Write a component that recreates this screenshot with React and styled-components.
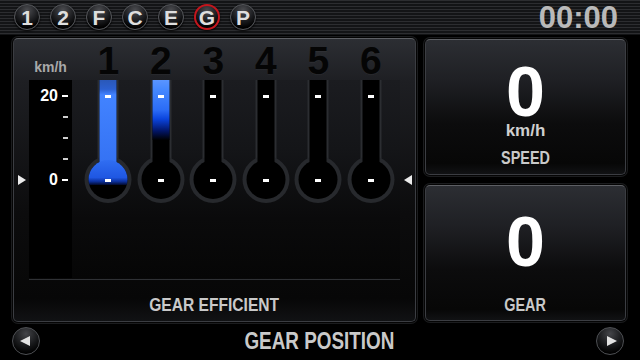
import React from "react"
import styled, { createGlobalStyle } from "styled-components"

const GlobalStyle = createGlobalStyle`
  html, body {
    margin: 0;
    padding: 0;
    background: #000;
  }
  body {
    font-family: "Liberation Sans", Arial, sans-serif;
  }
`

const Screen = styled.div`
  width: 640px;
  height: 360px;
  overflow: hidden;
  background: #000;
  display: flex;
  flex-direction: column;
`

const TopBar = styled.div`
  height: 36px;
  flex: none;
  box-sizing: border-box;
  display: flex;
  align-items: center;
  padding: 0 22px 1px 14px;
  background: repeating-linear-gradient(to bottom, #2c2d30 0 1px, #131416 1px 3px);
  border-bottom: 1px solid #000;
`
const ModeButtons = styled.div`
  display: flex;
  gap: 10px;
`
const ModeButton = styled.div`
  width: 26px;
  height: 26px;
  box-sizing: border-box;
  border-radius: 50%;
  display: flex;
  align-items: center;
  justify-content: center;
  background: radial-gradient(circle at 50% 22%, #4c4d51 0%, #1c1d20 48%, #000 78%);
  border: ${p => (p.$active ? "2px solid #c3161d" : "1px solid #56585c")};
  box-shadow: 0 1px 2px #000;
  color: #dedede;
  font-weight: bold;
  font-size: 21px;
  line-height: 1;
`
const Clock = styled.div`
  margin-left: auto;
  color: #b9b9b9;
  font-weight: bold;
  font-size: 31px;
  line-height: 1;
`

const Main = styled.div`
  display: flex;
  gap: 9px;
  padding: 2px 14px 0 13px;
  height: 284px;
  flex: none;
`

const Panel = styled.div`
  box-sizing: border-box;
  border-radius: 5px;
  border: 1px solid #3b3d42;
  border-top-color: #5d5f64;
  box-shadow: 0 0 0 1px #050505, 0 0 0 2px #1b1c1e;
  background: linear-gradient(to bottom, #2c2e33 0, #1e1f23 42px, #0c0c0d 62%, #070707 92%, #111214 100%);
`

const GaugePanel = styled(Panel)`
  width: 403px;
  height: 284px;
  display: flex;
  flex-direction: column;
`
const HeaderRow = styled.div`
  height: 41px;
  display: flex;
  align-items: flex-end;
  padding: 0 15px;
`
const UnitLabel = styled.div`
  width: 43px;
  text-align: center;
  color: #a9a9a9;
  font-weight: bold;
  font-size: 14px;
  padding-bottom: 5px;
`
const GaugeGrid = styled.div`
  flex: 1;
  display: grid;
  grid-template-columns: repeat(6, 1fr);
  padding: 0 3px 0 10px;
  justify-items: center;
  align-items: end;
`
const GearNumber = styled.div`
  color: #050505;
  font-weight: bold;
  font-size: 39px;
  line-height: 1;
  text-shadow: 0 1px 0 rgba(255, 255, 255, 0.05);
`

const GraphRow = styled.div`
  height: 198px;
  display: flex;
`
const MarkerColumn = styled.div`
  width: 15px;
  display: flex;
  justify-content: center;
  padding-top: 95px;
`
const Marker = styled.div`
  width: 0;
  height: 0;
  border-top: 5px solid transparent;
  border-bottom: 5px solid transparent;
  ${p => (p.$dir === "right" ? "border-left: 8px solid #ececec;" : "border-right: 8px solid #ececec;")}
`
const Graph = styled.div`
  width: 371px;
  display: flex;
`
const Scale = styled.div`
  width: 43px;
  background: #000;
  padding-top: 5.5px;
  box-sizing: border-box;
`
const ScaleRow = styled.div`
  height: 21px;
  display: flex;
  align-items: center;
  justify-content: flex-end;
  gap: 4px;
  padding-right: 4px;
  color: #fff;
  font-weight: bold;
  font-size: 16px;
`
const Tick = styled.div`
  width: ${p => (p.$major ? 6 : 5)}px;
  height: 2px;
  background: ${p => (p.$major ? "#fff" : "#cfcfcf")};
`
const Gauges = styled(GaugeGrid)`
  align-items: start;
  background: linear-gradient(to bottom, #1b1c20 0%, #141518 35%, #0a0a0b 70%, #060606 100%);
`

const Divider = styled.div`
  height: 1px;
  margin: 1px 15px 0;
  background: #2f3135;
`
const PanelFooter = styled.div`
  flex: 1;
  display: flex;
  align-items: center;
  justify-content: center;
  padding-top: 8px;
`
/* condensed caption: no narrow face is installed, so squeeze the bold sans */
const Caption = styled.div`
  display: inline-block;
  font-weight: bold;
  font-size: ${p => p.$size || 19}px;
  color: #c9c9c9;
  line-height: 1;
  white-space: nowrap;
  transform: scaleX(${p => p.$squeeze || 0.82});
`

const SideColumn = styled.div`
  width: 201px;
  padding-top: 1px;
  display: flex;
  flex-direction: column;
  gap: 10px;
`
const ValuePanel = styled(Panel)`
  height: 136px;
  display: flex;
  flex-direction: column;
  align-items: center;
  padding-top: ${p => p.$top}px;
`
const BigValue = styled.div`
  color: #fff;
  font-weight: bold;
  font-size: 70px;
  line-height: 56px;
  height: 56px;
`
const Unit = styled.div`
  color: #cfcfcf;
  font-weight: bold;
  font-size: 17px;
  line-height: 1;
  margin-top: 2px;
`
const ValueCaption = styled(Caption)`
  margin-top: ${p => p.$gap}px;
`

const BottomBar = styled.div`
  flex: 1;
  display: flex;
  align-items: center;
  padding: 0 16px 0 12px;
`
const RoundButton = styled.div`
  width: 28px;
  height: 28px;
  flex: none;
  box-sizing: border-box;
  border-radius: 50%;
  border: 1px solid #4e5054;
  background: radial-gradient(circle at 50% 22%, #444549 0%, #17181a 50%, #000 80%);
  display: flex;
  align-items: center;
  justify-content: center;
`
const Arrow = styled.div`
  width: 0;
  height: 0;
  border-top: 5px solid transparent;
  border-bottom: 5px solid transparent;
  ${p =>
    p.$dir === "right"
      ? "border-left: 10px solid #e2e2e2; margin-left: 3px;"
      : "border-right: 10px solid #e2e2e2; margin-right: 3px;"}
`
const TitleSlot = styled.div`
  flex: 1;
  display: flex;
  justify-content: center;
  padding-left: 3px;
`

const modes = ["1", "2", "F", "C", "E", "G", "P"]
const scale = [
  { label: "20", major: true },
  { label: "" },
  { label: "" },
  { label: "" },
  { label: "0", major: true },
]
const gears = [
  { num: 1, fill: "full" },
  { num: 2, fill: "top" },
  { num: 3 },
  { num: 4 },
  { num: 5 },
  { num: 6 },
]

const Thermometer = ({ id, fill }) => (
  <svg width="52" height="198" viewBox="0 0 52 198">
    <defs>
      <linearGradient id={`tube${id}`} x1="0" y1="0" x2="0" y2="92" gradientUnits="userSpaceOnUse">
        <stop offset="0" stopColor="#2a58b8" />
        <stop offset="0.1" stopColor="#2c60d0" />
        <stop offset="0.16" stopColor="#4283ff" />
        <stop offset="1" stopColor="#3370f2" />
      </linearGradient>
      <linearGradient id={`bulb${id}`} x1="0" y1="80" x2="0" y2="105" gradientUnits="userSpaceOnUse">
        <stop offset="0" stopColor="#306ef2" />
        <stop offset="0.7" stopColor="#1f57e2" />
        <stop offset="0.86" stopColor="#0c309c" />
        <stop offset="1" stopColor="#020a2a" />
      </linearGradient>
      <linearGradient id={`top${id}`} x1="0" y1="0" x2="0" y2="60" gradientUnits="userSpaceOnUse">
        <stop offset="0" stopColor="#5a95ff" />
        <stop offset="0.15" stopColor="#4689ff" />
        <stop offset="0.5" stopColor="#2b6cf6" />
        <stop offset="0.65" stopColor="#0b44dd" />
        <stop offset="0.85" stopColor="#021566" />
        <stop offset="1" stopColor="#000" />
      </linearGradient>
      <clipPath id={`clip${id}`}>
        <rect x="0" y="0" width="52" height="105" />
      </clipPath>
    </defs>
    <rect x="15.5" y="0" width="21" height="90" fill="#2b2d31" />
    <circle cx="26" cy="99.5" r="23.5" fill="#27292d" />
    <rect x="17.5" y="0" width="17" height="95" fill="#000" />
    <circle cx="26" cy="99.5" r="19.5" fill="#000" />
    {fill === "full" && (
      <>
        <rect x="17.5" y="0" width="17" height="92" fill={`url(#tube${id})`} />
        <circle cx="26" cy="99.5" r="19.5" fill={`url(#bulb${id})`} clipPath={`url(#clip${id})`} />
      </>
    )}
    {fill === "top" && <rect x="17.5" y="0" width="17" height="60" fill={`url(#top${id})`} />}
    <rect x="23" y="15" width="6" height="3" fill="#fff" />
    <rect x="23" y="99" width="6" height="3" fill="#fff" />
  </svg>
)

const App = () => {
  return (
    <Screen>
      <GlobalStyle />
      <TopBar>
        <ModeButtons>
          {modes.map(m => (
            <ModeButton key={m} $active={m === "G"}>
              {m}
            </ModeButton>
          ))}
        </ModeButtons>
        <Clock>00:00</Clock>
      </TopBar>

      <Main>
        <GaugePanel>
          <HeaderRow>
            <UnitLabel>km/h</UnitLabel>
            <GaugeGrid>
              {gears.map(g => (
                <GearNumber key={g.num}>{g.num}</GearNumber>
              ))}
            </GaugeGrid>
          </HeaderRow>
          <GraphRow>
            <MarkerColumn>
              <Marker $dir="right" />
            </MarkerColumn>
            <Graph>
              <Scale>
                {scale.map((s, i) => (
                  <ScaleRow key={i}>
                    {s.label && <span>{s.label}</span>}
                    <Tick $major={s.major} />
                  </ScaleRow>
                ))}
              </Scale>
              <Gauges>
                {gears.map(g => (
                  <Thermometer key={g.num} id={g.num} fill={g.fill} />
                ))}
              </Gauges>
            </Graph>
            <MarkerColumn>
              <Marker $dir="left" />
            </MarkerColumn>
          </GraphRow>
          <Divider />
          <PanelFooter>
            <Caption $size={19} $squeeze={0.82}>GEAR EFFICIENT</Caption>
          </PanelFooter>
        </GaugePanel>

        <SideColumn>
          <ValuePanel $top={24}>
            <BigValue>0</BigValue>
            <Unit>km/h</Unit>
            <ValueCaption $size={18} $squeeze={0.8} $gap={10}>SPEED</ValueCaption>
          </ValuePanel>
          <ValuePanel $top={28}>
            <BigValue>0</BigValue>
            <ValueCaption $size={18} $squeeze={0.8} $gap={26}>GEAR</ValueCaption>
          </ValuePanel>
        </SideColumn>
      </Main>

      <BottomBar>
        <RoundButton>
          <Arrow $dir="left" />
        </RoundButton>
        <TitleSlot>
          <Caption $size={23} $squeeze={0.82}>GEAR POSITION</Caption>
        </TitleSlot>
        <RoundButton>
          <Arrow $dir="right" />
        </RoundButton>
      </BottomBar>
    </Screen>
  )
}

export default App
